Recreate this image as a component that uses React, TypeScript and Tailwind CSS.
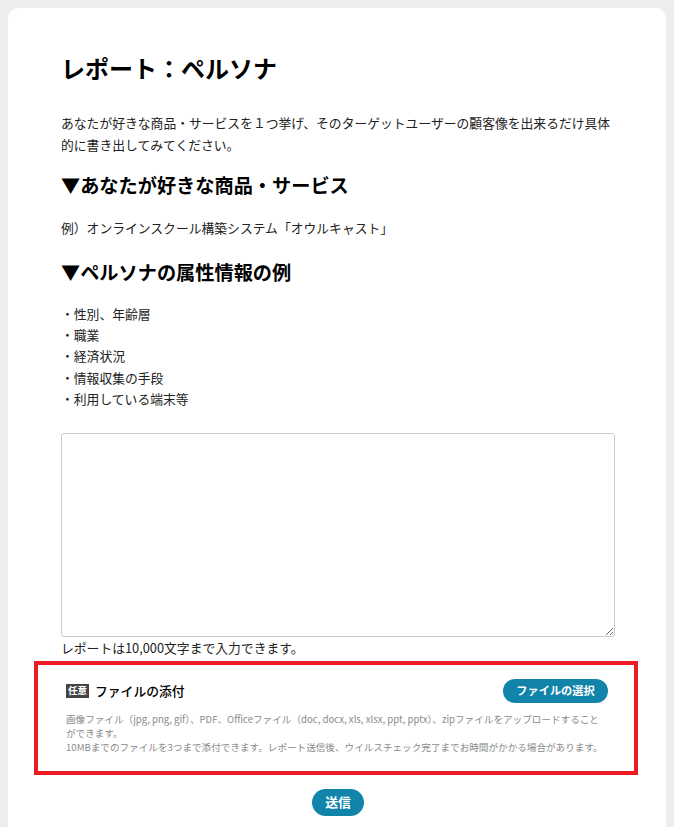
import React from "react";

export default function App() {
  const font = { fontFamily: '"Noto Sans CJK JP", "Noto Sans", sans-serif' };
  const items = ["性別、年齢層", "職業", "経済状況", "情報収集の手段", "利用している端末等"];
  return (
    <div className="min-h-[827px] bg-[#eeeeee] pt-2" style={font}>
      <div className="mx-2 rounded-[10px] bg-white pl-[53px] pr-[51px] pt-[42px] pb-10 text-[#222]">
        <h1 className="text-[24px] font-bold leading-[36px] text-black">レポート：ペルソナ</h1>
        <p className="mt-[26px] text-[12.8px] leading-[22px]">
          あなたが好きな商品・サービスを１つ挙げ、そのターゲットユーザーの顧客像を出来るだけ具体的に書き出してみてください。
        </p>
        <h2 className="mt-[14px] text-[19.2px] font-bold leading-[30px] text-black">▼あなたが好きな商品・サービス</h2>
        <p className="mt-[17px] text-[12.8px] leading-[22px]">例）オンラインスクール構築システム「オウルキャスト」</p>
        <h2 className="mt-[18px] text-[19.2px] font-bold leading-[30px] text-black">▼ペルソナの属性情報の例</h2>
        <ul className="mt-[16px] text-[12.8px] leading-[21.2px]">
          {items.map((t) => (
            <li key={t}>・{t}</li>
          ))}
        </ul>
        <textarea className="mt-[24px] block h-[204px] w-full rounded-[3px] border border-[#cccccc] bg-white outline-none" />
        <p className="mt-0 text-[12.8px] leading-[22px]">レポートは10,000文字まで入力できます。</p>
        <div className="mt-[2px] -ml-[27px] -mr-[23px] border-4 border-[#ed1c24] pt-[14px] pb-[17px] pl-[28px] pr-[26px]">
          <div className="flex h-[24px] items-center justify-between">
            <div className="flex items-center">
              <span className="flex h-[14px] w-[23px] items-center justify-center bg-[#444444] text-[9.6px] font-bold leading-none text-white">
                任意
              </span>
              <span className="ml-[6px] text-[12.8px] font-medium leading-[18px] text-black">ファイルの添付</span>
            </div>
            <button className="flex h-[24px] w-[105px] items-center justify-center rounded-full bg-[#1284a9] text-[11.2px] font-bold leading-none text-white">
              ファイルの選択
            </button>
          </div>
          <div className="mt-[9px] text-[9.6px] leading-[14px] text-[#8a8a8a]">
            <p className="pr-[6px]">
              画像ファイル（jpg, png, gif）、PDF、Officeファイル（doc, docx, xls, xlsx, ppt, pptx）、zipファイルをアップロードすることができます。
            </p>
            <p>10MBまでのファイルを3つまで添付できます。レポート送信後、ウイルスチェック完了までお時間がかかる場合があります。</p>
          </div>
        </div>
        <div className="mt-[14px] flex justify-center">
          <button className="flex h-[27px] w-[52px] items-center justify-center rounded-full bg-[#1284a9] text-[12.8px] font-bold leading-none text-white">
            送信
          </button>
        </div>
      </div>
    </div>
  );
}
